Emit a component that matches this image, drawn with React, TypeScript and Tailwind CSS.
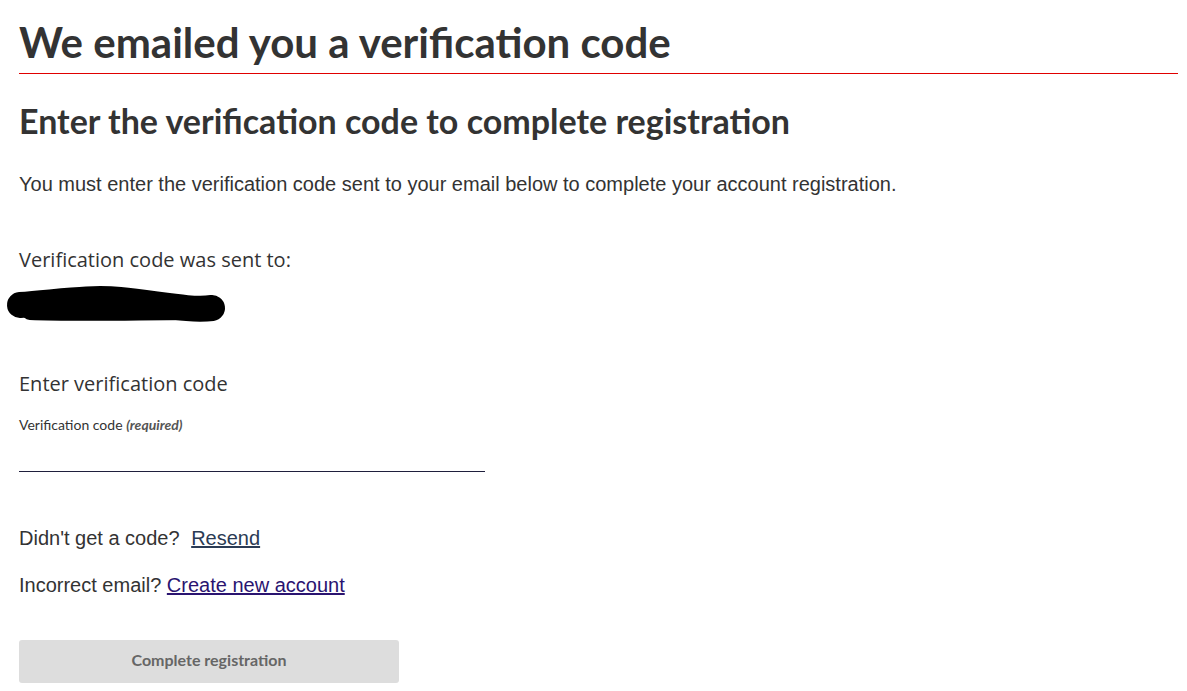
import React from 'react';

export default function App() {
  return (
    <div className="min-h-screen bg-white text-[#333] pl-[19px] pr-[9px]">
      <h1 className="pt-[17px] pb-[6px] font-['Lato',sans-serif] font-bold text-[42px] leading-[50px] text-[#333]">
        We emailed you a verification code
      </h1>
      <hr className="h-px border-0 bg-[#e00000]" />

      <h2 className="mt-[26px] font-['Lato',sans-serif] font-bold text-[34px] leading-[42px] text-[#333]">
        Enter the verification code to complete registration
      </h2>

      <p className="mt-[30px] font-['Liberation_Sans',Arial,sans-serif] text-[20px] leading-[24px] text-[#333]">
        You must enter the verification code sent to your email below to complete your account registration.
      </p>

      <p className="mt-[50px] font-['Open_Sans',sans-serif] text-[20px] leading-[28px] text-[#333]">
        Verification code was sent to:
      </p>

      {/* email redacted in the screenshot */}
      <div className="-ml-[19px] mt-[8px] h-[48px]">
        <svg width="240" height="48" viewBox="0 0 240 48">
          <path
            d="M20 23 C60 20, 90 15, 120 18 C160 22, 190 29, 212 26"
            fill="none"
            stroke="#000"
            strokeWidth="26"
            strokeLinecap="round"
          />
          <path d="M30 30 C80 32, 140 30, 200 30" fill="none" stroke="#000" strokeWidth="16" strokeLinecap="round" />
        </svg>
      </div>

      <p className="mt-[40px] font-['Open_Sans',sans-serif] text-[20px] leading-[28px] text-[#333]">
        Enter verification code
      </p>

      <label className="block mt-[18px] font-['Lato',sans-serif] text-[14px] leading-[18px] text-[#333]">
        Verification code <em className="font-bold text-[#555]">(required)</em>
      </label>

      <input
        type="text"
        className="block mt-[9px] w-[466px] h-[29px] border-b border-[#1f1f3d] outline-none bg-transparent"
      />

      <p className="mt-[53px] font-['Liberation_Sans',Arial,sans-serif] text-[20px] leading-[26px] text-[#333]">
        Didn't get a code?{' '}
        <a href="#" className="ml-[6px] underline text-[#2b3b54]">
          Resend
        </a>
      </p>

      <p className="mt-[21px] font-['Liberation_Sans',Arial,sans-serif] text-[20px] leading-[26px] text-[#333]">
        Incorrect email?{' '}
        <a href="#" className="underline text-[#2a1470]">
          Create new account
        </a>
      </p>

      <button
        disabled
        className="mt-[42px] w-[380px] h-[43px] pb-[3px] rounded-[3px] bg-[#dddddd] font-['Lato',sans-serif] font-bold text-[16px] text-[#666]"
      >
        Complete registration
      </button>
    </div>
  );
}
